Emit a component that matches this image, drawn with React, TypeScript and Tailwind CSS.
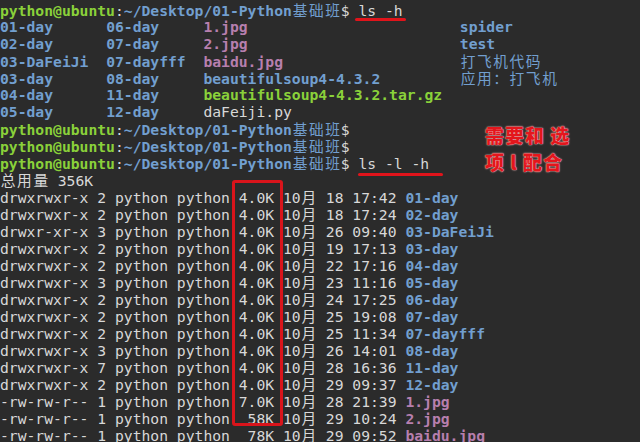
import React from "react";

type Seg = [string, string];

const G = "text-[#8ad13a] font-bold";
const B = "text-[#729fcf] font-bold";
const W = "text-[#d8d8d8]";
const P = "text-[#b77fae] font-bold";

const isWide = (ch: string) => /[\u3000-\u9fff\uff00-\uffef]/.test(ch);

// wide chars take two cells like in the terminal
const Cells = ({ text }: { text: string }) => {
  const parts: React.ReactNode[] = [];
  let buf = "";
  Array.from(text).forEach((ch, i) => {
    if (isWide(ch)) {
      if (buf) parts.push(buf);
      buf = "";
      parts.push(
        <span key={i} className="inline-block w-[2ch] text-center font-['Noto_Sans_CJK_SC',sans-serif] font-normal">
          {ch}
        </span>
      );
    } else {
      buf += ch;
    }
  });
  if (buf) parts.push(buf);
  return <>{parts}</>;
};

const Line = ({ segs }: { segs: Seg[] }) => (
  <div className="h-[17px] leading-[17px] whitespace-pre">
    {segs.map(([t, c], i) => (
      <span key={i} className={c}>
        <Cells text={t} />
      </span>
    ))}
  </div>
);

const prompt = (cmd: string): Seg[] => [
  ["python@ubuntu", G],
  [":", W],
  ["~/Desktop/01-Python基础班", B],
  ["$" + cmd, W],
];

const pad = (s: string, n: number) => s + " ".repeat(Math.max(0, n - s.length));

const shortList: Seg[][] = [
  [[pad("01-day", 12), B], [pad("06-day", 11), B], [pad("1.jpg", 29), P], ["spider", B]],
  [[pad("02-day", 12), B], [pad("07-day", 11), B], [pad("2.jpg", 29), P], ["test", B]],
  [[pad("03-DaFeiJi", 12), B], [pad("07-dayfff", 11), B], [pad("baidu.jpg", 29), P], ["打飞机代码", B]],
  [[pad("03-day", 12), B], [pad("08-day", 11), B], [pad("beautifulsoup4-4.3.2", 29), B], ["应用：打飞机", B]],
  [[pad("04-day", 12), B], [pad("11-day", 11), B], ["beautifulsoup4-4.3.2.tar.gz", G]],
  [[pad("05-day", 12), B], [pad("12-day", 11), B], ["daFeiji.py", W]],
];

const rows: [string, string, string, string, string, string, boolean][] = [
  ["drwxrwxr-x", "2", "4.0K", "18", "17:42", "01-day", true],
  ["drwxrwxr-x", "2", "4.0K", "18", "17:24", "02-day", true],
  ["drwxr-xr-x", "3", "4.0K", "26", "09:40", "03-DaFeiJi", true],
  ["drwxrwxr-x", "2", "4.0K", "19", "17:13", "03-day", true],
  ["drwxrwxr-x", "2", "4.0K", "22", "17:16", "04-day", true],
  ["drwxrwxr-x", "3", "4.0K", "23", "11:16", "05-day", true],
  ["drwxrwxr-x", "2", "4.0K", "24", "17:25", "06-day", true],
  ["drwxrwxr-x", "2", "4.0K", "25", "19:08", "07-day", true],
  ["drwxrwxr-x", "2", "4.0K", "25", "11:34", "07-dayfff", true],
  ["drwxrwxr-x", "3", "4.0K", "26", "14:01", "08-day", true],
  ["drwxrwxr-x", "7", "4.0K", "28", "16:36", "11-day", true],
  ["drwxrwxr-x", "2", "4.0K", "29", "09:37", "12-day", true],
  ["-rw-rw-r--", "1", "7.0K", "28", "21:39", "1.jpg", false],
  ["-rw-rw-r--", "1", " 58K", "29", "10:24", "2.jpg", false],
  ["-rw-rw-r--", "1", " 78K", "29", "09:52", "baidu.jpg", false],
];

export default function App() {
  return (
    <div className="relative w-[640px] h-[442px] overflow-hidden bg-[#2b2b2b] font-['DejaVu_Sans_Mono',monospace] text-[14.7px] text-[#d8d8d8]">
      <div className="flex flex-col pt-px">
        <Line segs={prompt(" ls -h")} />
        {shortList.map((segs, i) => (
          <Line key={i} segs={segs} />
        ))}
        <Line segs={prompt("")} />
        <Line segs={prompt("")} />
        <Line segs={prompt(" ls -l -h")} />
        <Line segs={[["总用量 356K", W]]} />
        {rows.map(([perm, n, size, day, time, name, dir]) => (
          <Line
            key={name}
            segs={[
              [`${perm} ${n} python python ${size} 10月 ${day} ${time} `, W],
              [name, dir ? B : P],
            ]}
          />
        ))}
      </div>

      {/* annotations drawn on top */}
      <div className="absolute left-[355px] top-[18px] w-[51px] h-[3px] rounded-full bg-[#e0141b]" />
      <div className="absolute left-[358px] top-[173px] w-[85px] h-[3px] rounded-full bg-[#e0141b]" />
      <div className="absolute left-[232px] top-[180px] w-[51px] h-[246px] rounded-[3px] border-[3px] border-[#d9141b]" />
      <div className="absolute left-[485px] top-[121px] font-['Noto_Sans_CJK_SC',sans-serif] font-black text-[19px] leading-[27px] tracking-[1px] text-[#e3161c] [text-shadow:0_0_1px_#ffd0d0,0_0_2px_#ffb0b0]">
        <div>需要和 选</div>
        <div>项 l 配合</div>
      </div>
    </div>
  );
}
